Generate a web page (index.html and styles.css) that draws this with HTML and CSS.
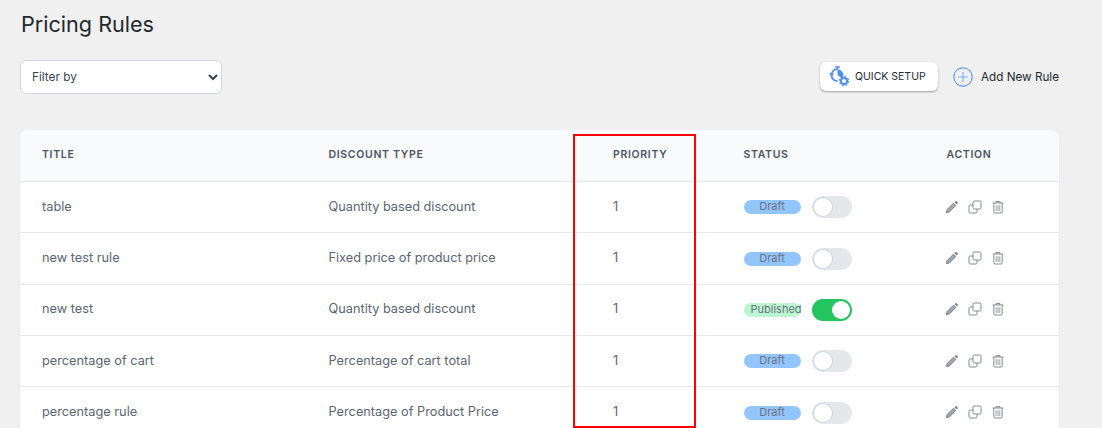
FILE: index.html
```html
<!DOCTYPE html>
<html lang="en">
<head>
<meta charset="utf-8">
<title>Pricing Rules</title>
<link rel="stylesheet" href="styles.css">
</head>
<body>
<svg class="sprites" width="0" height="0" aria-hidden="true">
  <symbol id="pencil" viewBox="0 0 14 14">
    <path d="M1.4 12.6l.7-3 6.4-6.4 2.3 2.3-6.4 6.4z" fill="#a3a6ab" stroke="#7b7f86" stroke-width="1"/>
    <path d="M9.5 2.2l.9-.9a.9.9 0 0 1 1.2 0l1.1 1.1a.9.9 0 0 1 0 1.2l-.9.9z" fill="#7b7f86"/>
  </symbol>
  <symbol id="copy" viewBox="0 0 14 14">
    <rect x="5" y="1" width="8" height="8" rx="1.2" fill="none" stroke="#85898f"/>
    <path d="M5 5H2.2C1.5 5 1 5.5 1 6.2v5.6c0 .7.5 1.2 1.2 1.2h5.6c.7 0 1.2-.5 1.2-1.2V9" fill="none" stroke="#85898f"/>
  </symbol>
  <symbol id="trash" viewBox="0 0 14 14">
    <path d="M1.6 3h10.8M5 3V1.6h4V3" fill="none" stroke="#85898f"/>
    <path d="M2.8 3.2v8.6c0 .7.5 1.2 1.2 1.2h6c.7 0 1.2-.5 1.2-1.2V3.2" fill="none" stroke="#85898f"/>
    <path d="M5.2 5.2v5.8M7 5.2v5.8M8.8 5.2v5.8" fill="none" stroke="#85898f" stroke-width=".8"/>
  </symbol>
</svg>

<main class="page">
  <h1 class="title">Pricing Rules</h1>

  <div class="toolbar">
    <select class="filter">
      <option>Filter by</option>
    </select>
    <div class="actions">
      <button class="quick" type="button">
        <svg class="quick-icon" viewBox="0 0 20 20" width="20" height="20" aria-hidden="true">
          <path d="M6.2 1h4.6" stroke="#4f8ff0" stroke-width="1.6" fill="none"/>
          <path d="M8.5 1v2" stroke="#4f8ff0" stroke-width="1.6" fill="none"/>
          <path d="M8.5 3.2a6 6 0 0 1 4.6 9.6l-4.6-3.7V3.2z" fill="#4f8ff0"/>
          <path d="M8.5 3.2a6 6 0 0 0-6 6 6 6 0 0 0 6 6" fill="none" stroke="#4f8ff0" stroke-width="1.8"/>
          <path d="M1 7l1.6 2.4L4.4 7.4" fill="none" stroke="#4f8ff0" stroke-width="1.4"/>
          <circle cx="15" cy="15" r="3.1" fill="none" stroke="#4f8ff0" stroke-width="2"/>
          <circle cx="15" cy="15" r="4.6" fill="none" stroke="#4f8ff0" stroke-width="1.2" stroke-dasharray="1.8 1.8"/>
        </svg>
        <span>QUICK SETUP</span>
      </button>
      <a class="add" href="#">
        <svg viewBox="0 0 20 20" width="20" height="20" aria-hidden="true">
          <circle cx="10" cy="10" r="9.2" fill="none" stroke="#3b82f6" stroke-width="1"/>
          <path d="M10 5v10M5 10h10" stroke="#7fb0f5" stroke-width="1.1" fill="none"/>
        </svg>
        <span>Add New Rule</span>
      </a>
    </div>
  </div>

  <div class="card">
    <table class="rules">
      <colgroup>
        <col class="c-title"><col class="c-type"><col class="c-priority"><col class="c-status"><col class="c-action">
      </colgroup>
      <thead>
        <tr><th>TITLE</th><th>DISCOUNT TYPE</th><th>PRIORITY</th><th>STATUS</th><th>ACTION</th></tr>
      </thead>
      <tbody>
        <tr>
          <td>table</td><td>Quantity based discount</td><td>1</td>
          <td><div class="status"><span class="badge draft">Draft</span><span class="toggle"><i></i></span></div></td>
          <td><div class="icons"><svg><use href="#pencil"/></svg><svg><use href="#copy"/></svg><svg><use href="#trash"/></svg></div></td>
        </tr>
        <tr>
          <td>new test rule</td><td>Fixed price of product price</td><td>1</td>
          <td><div class="status"><span class="badge draft">Draft</span><span class="toggle"><i></i></span></div></td>
          <td><div class="icons"><svg><use href="#pencil"/></svg><svg><use href="#copy"/></svg><svg><use href="#trash"/></svg></div></td>
        </tr>
        <tr>
          <td>new test</td><td>Quantity based discount</td><td>1</td>
          <td><div class="status"><span class="badge published">Published</span><span class="toggle on"><i></i></span></div></td>
          <td><div class="icons"><svg><use href="#pencil"/></svg><svg><use href="#copy"/></svg><svg><use href="#trash"/></svg></div></td>
        </tr>
        <tr>
          <td>percentage of cart</td><td>Percentage of cart total</td><td>1</td>
          <td><div class="status"><span class="badge draft">Draft</span><span class="toggle"><i></i></span></div></td>
          <td><div class="icons"><svg><use href="#pencil"/></svg><svg><use href="#copy"/></svg><svg><use href="#trash"/></svg></div></td>
        </tr>
        <tr>
          <td>percentage rule</td><td>Percentage of Product Price</td><td>1</td>
          <td><div class="status"><span class="badge draft">Draft</span><span class="toggle"><i></i></span></div></td>
          <td><div class="icons"><svg><use href="#pencil"/></svg><svg><use href="#copy"/></svg><svg><use href="#trash"/></svg></div></td>
        </tr>
      </tbody>
    </table>
  </div>
</main>
<div class="highlight"></div>
</body>
</html>
```

FILE: styles.css
```css
* { box-sizing: border-box; }
html, body { height: 100%; }
body {
  margin: 0;
  height: 428px;
  overflow: hidden;
  background: #f0f0f1;
  font-family: Inter, "Liberation Sans", sans-serif;
  color: #374151;
  position: relative;
}
.sprites { position: absolute; }
.page { padding: 11px 43px 0 20px; }
.title {
  margin: 0 0 0 1px;
  font-size: 21.6px;
  line-height: 26px;
  font-weight: 400;
  color: #23282d;
}
.toolbar {
  margin-top: 23px;
  display: flex;
  justify-content: space-between;
  align-items: flex-start;
}
.filter {
  width: 202px;
  height: 34px;
  padding: 0 0 0 7px;
  background: #fff;
  border: 1px solid #d1d5db;
  border-radius: 6px;
  font: 400 11.8px Inter, "Liberation Sans", sans-serif;
  color: #374151;
}
.actions { display: flex; align-items: center; gap: 15px; margin-top: 2px; }
.quick {
  width: 118px;
  height: 29px;
  display: flex;
  align-items: center;
  gap: 6px;
  padding: 0 0 1px 9px;
  background: #fff;
  border: 0;
  border-radius: 6px;
  box-shadow: 0 1px 2px rgba(0,0,0,.35);
  font: 400 10.5px Inter, "Liberation Sans", sans-serif;
  color: #1f2937;
}
.quick-icon { flex: none; }
.add {
  display: flex;
  align-items: center;
  gap: 8px;
  font-size: 11.7px;
  color: #23282d;
  text-decoration: none;
}
.card {
  margin-top: 36px;
  background: #fff;
  border-radius: 8px 8px 0 0;
  overflow: hidden;
  box-shadow: 0 1px 2px rgba(0,0,0,.05);
}
.rules {
  width: 100%;
  border-collapse: collapse;
  table-layout: fixed;
  font-size: 12.75px;
}
.c-title { width: 286.5px; }
.c-type { width: 284.5px; }
.c-priority { width: 130.5px; }
.c-status { width: 203px; }
.rules th {
  height: 51.5px;
  padding: 0 0 3px 22px;
  text-align: left;
  background: #f9fafb;
  font-size: 10.5px;
  font-weight: 600;
  letter-spacing: .68px;
  color: #4b5563;
  border-bottom: 1px solid #e5e7eb;
}
.rules td {
  height: 51.35px;
  padding: 0 0 2px 22px;
  color: #5b6472;
  border-bottom: 1px solid #e5e7eb;
}
.status { display: flex; align-items: center; gap: 11px; margin-top: 2px; }
.badge {
  width: 57px;
  height: 14px;
  padding: 0 7px;
  border-radius: 7px;
  font-size: 11px;
  line-height: 13px;
  text-align: center;
  white-space: nowrap;
  color: #6b7280;
}
.badge.draft { background: #93c5fd; }
.badge.published { background: #bbf7d0; }
.toggle {
  width: 40px;
  height: 22px;
  padding: 2px;
  border-radius: 11px;
  background: #e5e7eb;
  display: flex;
}
.toggle i {
  width: 18px;
  height: 18px;
  border-radius: 50%;
  background: #fff;
  box-shadow: 0 0 0 1px #d1d5db;
}
.toggle.on { background: #22c55e; justify-content: flex-end; }
.toggle.on i { box-shadow: none; }
.icons { display: flex; gap: 9px; margin: 1px 0 0 -2px; }
.icons svg { width: 14px; height: 14px; display: block; }
.highlight {
  position: absolute;
  left: 573px;
  top: 134px;
  width: 123px;
  height: 294px;
  border: 2px solid #f00;
}
```
